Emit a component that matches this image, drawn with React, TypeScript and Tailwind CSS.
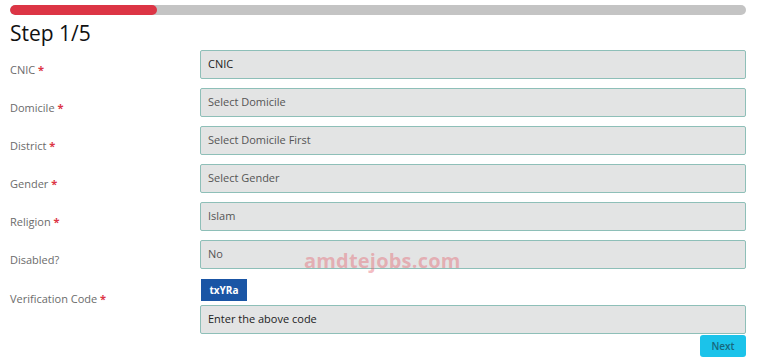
const fields = [
  { label: "CNIC", required: true, value: "CNIC", dark: true },
  { label: "Domicile", required: true, value: "Select Domicile" },
  { label: "District", required: true, value: "Select Domicile First" },
  { label: "Gender", required: true, value: "Select Gender" },
  { label: "Religion", required: true, value: "Islam" },
  { label: "Disabled?", required: false, value: "No" },
];

const Label = ({ text, required }: { text: string; required?: boolean }) => (
  <div className="w-[190px] shrink-0 pt-[12px] leading-[15px] text-[11px] text-[#6b6b6b]">
    {text}
    {required && <span className="text-[#dc3545] font-bold"> *</span>}
  </div>
);

const Field = ({ value, dark }: { value: string; dark?: boolean }) => (
  <div
    className={`w-full shrink-0 h-[29px] flex items-center px-[7px] border border-[#8ebfb8] rounded-[2px] bg-[#e3e4e4] text-[11px] ${
      dark ? "text-[#222]" : "text-[#555]"
    }`}
  >
    {value}
  </div>
);

const App = () => {
  return (
    <div className="relative w-[768px] h-[363px] bg-white pl-[10px] pr-[22px] pt-[5px] font-['Open_Sans',sans-serif] overflow-hidden">
      <div className="h-[10px] rounded-full bg-[#c4c4c4] overflow-hidden">
        <div className="h-full w-[147px] bg-[#dc3545] rounded-full" />
      </div>
      <h1 className="text-[21px] leading-[30px] text-[#111] mt-[3px] mb-[2px]">Step 1/5</h1>
      <div className="flex flex-col gap-[9px]">
        {fields.map((f) => (
          <div key={f.label} className="flex">
            <Label text={f.label} required={f.required} />
            <div className="flex-1">
              <Field value={f.value} dark={f.dark} />
            </div>
          </div>
        ))}
        <div className="flex mt-[1px]">
          <Label text="Verification Code" required />
          <div className="flex-1 flex flex-col gap-[4px]">
            <div className="w-[46px] h-[22px] ml-[1px] bg-[#1a55a5] text-white text-[10px] font-bold flex items-center justify-center">
              txYRa
            </div>
            <Field value="Enter the above code" dark />
            <div className="flex justify-end -mt-[3px]">
              <button className="w-[46px] h-[22px] rounded-[3px] bg-[#1bc3ea] text-[#17687d] text-[10px] font-semibold">
                Next
              </button>
            </div>
          </div>
        </div>
      </div>
      <div className="absolute left-[304px] top-[246px] text-[20px] font-bold text-[#e56a75]/45 tracking-[0.2px] pointer-events-none">
        amdtejobs.com
      </div>
    </div>
  );
};

export default App;
